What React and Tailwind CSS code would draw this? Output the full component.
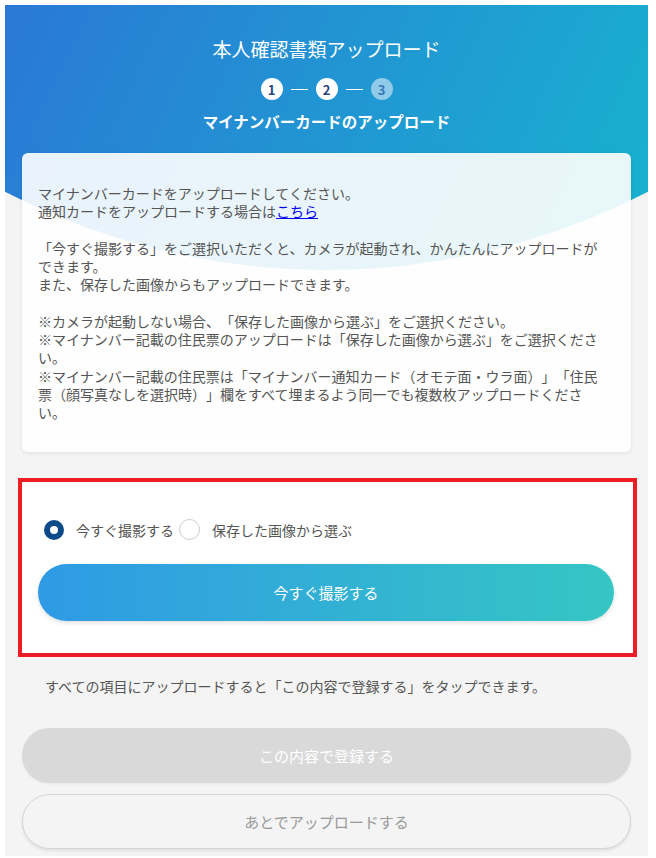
export default function App() {
  const font = { fontFamily: '"Noto Sans CJK JP", "Noto Sans", sans-serif' };
  return (
    <div className="bg-white pt-[5px] pl-[5px] pr-[8px] pb-[3px] [text-spacing-trim:space-all]" style={font}>
      <div className="relative overflow-hidden bg-[#f4f4f4] pb-[7px]">
        <div className="absolute top-0 left-0 w-full h-[265px] [clip-path:circle(700px_at_50%_-435px)] bg-[linear-gradient(115deg,#2a78d5_0%,#2390d3_40%,#17b3cf_100%)]" />
        <div className="relative flex flex-col items-center pt-[31px]">
          <h1 className="text-[19px] leading-[26px] text-white font-normal">本人確認書類アップロード</h1>
          <div className="mt-[16px] flex items-center">
            <div className="w-[22px] h-[22px] rounded-full bg-white flex items-center justify-center text-[13px] font-bold text-[#23477e] leading-none">1</div>
            <div className="mx-[8px] w-[17px] h-px bg-white" />
            <div className="w-[22px] h-[22px] rounded-full bg-white flex items-center justify-center text-[13px] font-bold text-[#23477e] leading-none">2</div>
            <div className="mx-[8px] w-[17px] h-px bg-white" />
            <div className="w-[22px] h-[22px] rounded-full bg-white/50 flex items-center justify-center text-[13px] font-bold text-[#3a78b8] leading-none">3</div>
          </div>
          <h2 className="mt-[11px] text-[15.5px] leading-[20px] font-bold text-white">マイナンバーカードのアップロード</h2>
        </div>
        <div className="relative mt-[22px] mx-[17px] rounded-[6px] bg-white/90 shadow-[0_1px_4px_rgba(0,0,0,0.08)] pt-[31px] pb-[31px] pl-[16px] pr-[24px] text-[14px] leading-[18.25px] text-[#555]">
          <p>マイナンバーカードをアップロードしてください。<br />通知カードをアップロードする場合は<a className="text-[#0000ee] underline">こちら</a></p>
          <p className="mt-[18.25px]">「今すぐ撮影する」をご選択いただくと、カメラが起動され、かんたんにアップロードができます。<br />また、保存した画像からもアップロードできます。</p>
          <p className="mt-[18.25px]">※カメラが起動しない場合、「保存した画像から選ぶ」をご選択ください。<br />※マイナンバー記載の住民票のアップロードは「保存した画像から選ぶ」をご選択ください。<br />※マイナンバー記載の住民票は「マイナンバー通知カード（オモテ面・ウラ面）」「住民票（顔写真なしを選択時）」欄をすべて埋まるよう同一でも複数枚アップロードください。</p>
        </div>
        <div className="relative mt-[26px] ml-[13px] mr-[11px] border-4 border-[#ee1c25] bg-white pt-[37px] pb-[32px] pl-[16px] pr-[19px]">
          <div className="flex items-center pl-[6px] text-[14px] text-[#555] leading-[20px]">
            <span className="w-5 h-5 rounded-full border-[6px] border-[#0d4a8a] bg-white" />
            <span className="ml-[12px]">今すぐ撮影する</span>
            <span className="ml-[5px] w-[21px] h-[21px] rounded-full border border-[#cccccc] bg-white" />
            <span className="ml-[12px]">保存した画像から選ぶ</span>
          </div>
          <button className="mt-[24px] w-full h-[57px] rounded-full bg-[linear-gradient(90deg,#2f9ae5,#35c6c4)] text-white text-[15px] shadow-[0_2px_4px_rgba(0,0,0,0.12)]">今すぐ撮影する</button>
        </div>
        <p className="relative mt-[19px] pl-[40px] text-[14px] leading-[20px] text-[#555]">すべての項目にアップロードすると「この内容で登録する」をタップできます。</p>
        <div className="relative mt-[32px] mx-[17px] flex flex-col gap-[11px]">
          <button className="w-full h-[55px] rounded-full bg-[#d9d9d9] text-white text-[15px] shadow-[0_1px_3px_rgba(0,0,0,0.06)]">この内容で登録する</button>
          <button className="w-full h-[55px] rounded-full bg-[#f4f4f4] border border-[#d4d4d4] text-[#999] text-[15px] shadow-[0_2px_3px_rgba(0,0,0,0.08)]">あとでアップロードする</button>
        </div>
      </div>
    </div>
  );
}
